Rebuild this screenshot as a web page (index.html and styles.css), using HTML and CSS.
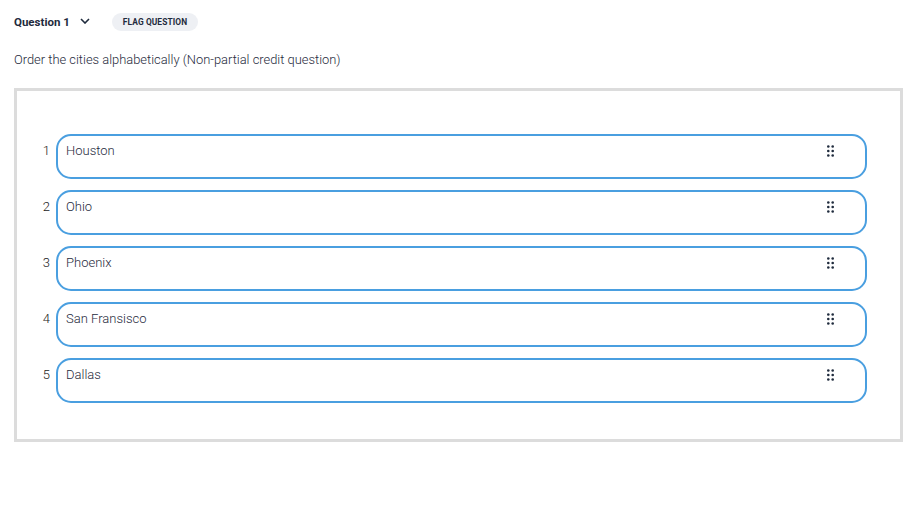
FILE: index.html
```html
<!DOCTYPE html>
<html lang="en">
<head>
    <meta charset="UTF-8">
    <title>Question 1</title>
    <link rel="stylesheet" href="styles.css">
</head>
<body>
    <div class="header">
        <span class="q-title">Question 1</span>
        <svg class="chevron" width="10" height="6" viewBox="0 0 10 6"><path d="M1 1l4 4 4-4" fill="none" stroke="#1f2b3d" stroke-width="1.6"/></svg>
        <span class="flag">FLAG QUESTION</span>
    </div>
    <p class="prompt">Order the cities alphabetically (Non-partial credit question)</p>

    <div class="answer-box">
        <div class="row">
            <span class="num">1</span>
            <div class="item"><span class="label">Houston</span><svg class="grip" width="8" height="12" viewBox="0 0 8 12"><circle cx="1.3" cy="1.5" r="1.3"/><circle cx="5.7" cy="1.5" r="1.3"/><circle cx="1.3" cy="6" r="1.3"/><circle cx="5.7" cy="6" r="1.3"/><circle cx="1.3" cy="10.5" r="1.3"/><circle cx="5.7" cy="10.5" r="1.3"/></svg></div>
        </div>
        <div class="row">
            <span class="num">2</span>
            <div class="item"><span class="label">Ohio</span><svg class="grip" width="8" height="12" viewBox="0 0 8 12"><circle cx="1.3" cy="1.5" r="1.3"/><circle cx="5.7" cy="1.5" r="1.3"/><circle cx="1.3" cy="6" r="1.3"/><circle cx="5.7" cy="6" r="1.3"/><circle cx="1.3" cy="10.5" r="1.3"/><circle cx="5.7" cy="10.5" r="1.3"/></svg></div>
        </div>
        <div class="row">
            <span class="num">3</span>
            <div class="item"><span class="label">Phoenix</span><svg class="grip" width="8" height="12" viewBox="0 0 8 12"><circle cx="1.3" cy="1.5" r="1.3"/><circle cx="5.7" cy="1.5" r="1.3"/><circle cx="1.3" cy="6" r="1.3"/><circle cx="5.7" cy="6" r="1.3"/><circle cx="1.3" cy="10.5" r="1.3"/><circle cx="5.7" cy="10.5" r="1.3"/></svg></div>
        </div>
        <div class="row">
            <span class="num">4</span>
            <div class="item"><span class="label">San Fransisco</span><svg class="grip" width="8" height="12" viewBox="0 0 8 12"><circle cx="1.3" cy="1.5" r="1.3"/><circle cx="5.7" cy="1.5" r="1.3"/><circle cx="1.3" cy="6" r="1.3"/><circle cx="5.7" cy="6" r="1.3"/><circle cx="1.3" cy="10.5" r="1.3"/><circle cx="5.7" cy="10.5" r="1.3"/></svg></div>
        </div>
        <div class="row">
            <span class="num">5</span>
            <div class="item"><span class="label">Dallas</span><svg class="grip" width="8" height="12" viewBox="0 0 8 12"><circle cx="1.3" cy="1.5" r="1.3"/><circle cx="5.7" cy="1.5" r="1.3"/><circle cx="1.3" cy="6" r="1.3"/><circle cx="5.7" cy="6" r="1.3"/><circle cx="1.3" cy="10.5" r="1.3"/><circle cx="5.7" cy="10.5" r="1.3"/></svg></div>
        </div>
    </div>
</body>
</html>
```

FILE: styles.css
```css
body {
    font-family: Roboto, "Liberation Sans", sans-serif;
    margin: 0;
    padding: 13px 7px 0 14px;
    background: #fff;
    color: #1f2b3d;
}
.header {
    display: flex;
    align-items: center;
    height: 18px;
}
.q-title {
    font-size: 11.5px;
    font-weight: 700;
}
.chevron {
    margin-left: 10px;
    margin-bottom: 3px;
}
.flag {
    margin-left: 22px;
    background: #eef0f4;
    border-radius: 9px;
    padding: 0 11px;
    height: 18px;
    line-height: 18px;
    font-size: 8.4px;
    font-weight: 700;
    letter-spacing: 0.1px;
}
.prompt {
    margin: 21px 0 20px;
    font-size: 12.9px;
    font-weight: 300;
    line-height: 16px;
    color: #1f2b3d;
}
.answer-box {
    border: 3px solid #dcdcdc;
    height: 354px;
    box-sizing: border-box;
    padding: 43px 33px 0 0;
    display: flex;
    flex-direction: column;
    gap: 11px;
}
.row {
    display: flex;
    align-items: flex-start;
}
.num {
    width: 39px;
    box-sizing: border-box;
    text-align: right;
    padding: 8px 6px 0 0;
    font-size: 13px;
    font-weight: 300;
    line-height: 18px;
    color: #222;
}
.item {
    flex: 1;
    height: 45px;
    box-sizing: border-box;
    border: 2px solid #4a9fe0;
    border-radius: 15px;
    padding: 6px 8px;
    display: flex;
    align-items: flex-start;
}
.label {
    flex: 1;
    font-size: 13px;
    font-weight: 300;
    line-height: 18px;
    color: #1f2b3d;
}
.grip {
    margin: 3px 22px 0 0;
    fill: #1f2b3d;
}
```
